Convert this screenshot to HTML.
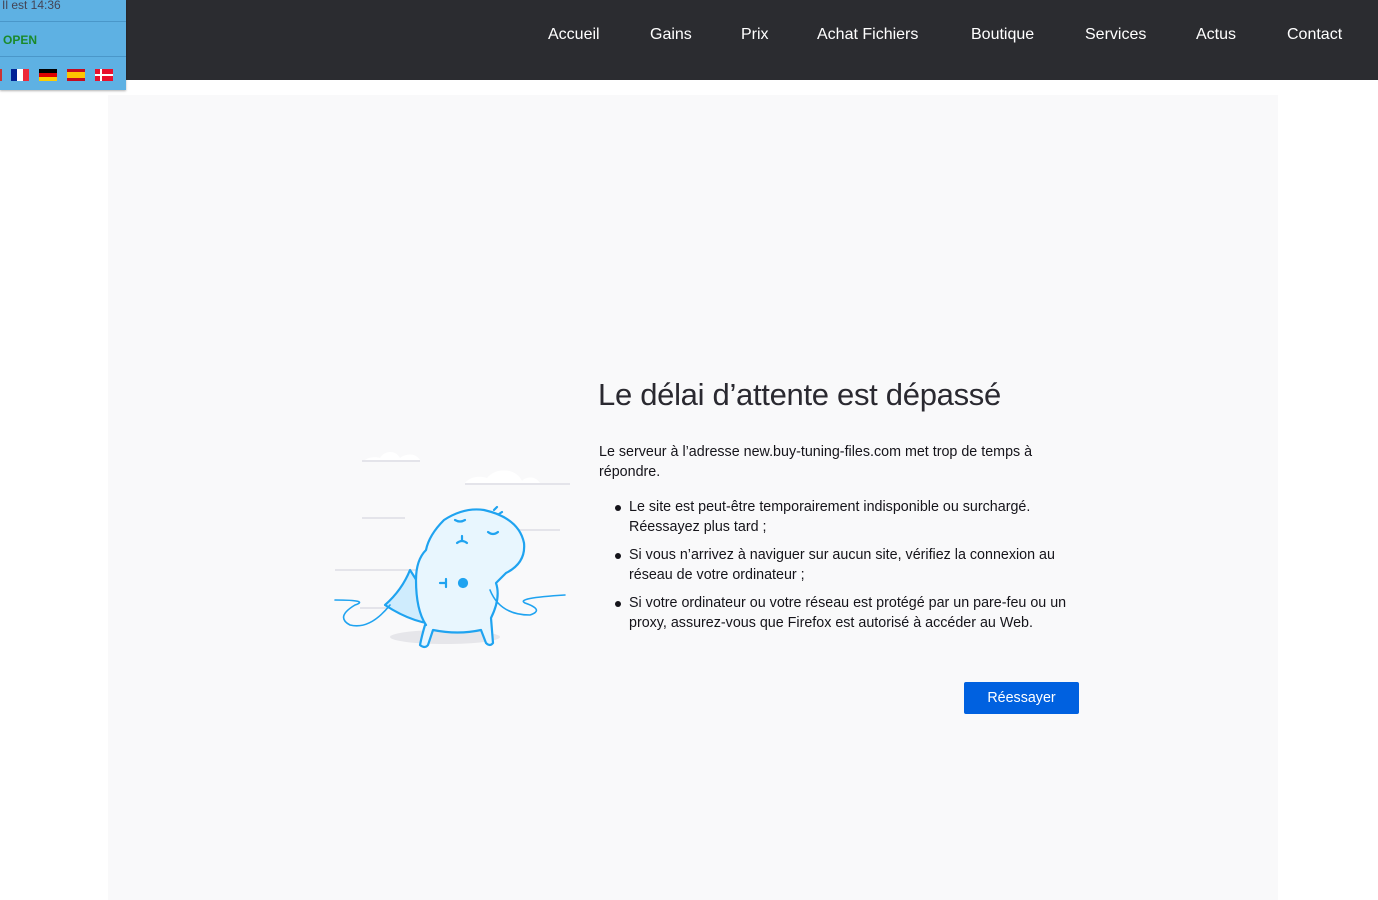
<!DOCTYPE html>
<html><head><meta charset="utf-8"><style>
*{margin:0;padding:0;box-sizing:border-box}
body{width:1378px;height:900px;background:#fff;font-family:"Liberation Sans",sans-serif;position:relative;overflow:hidden}
.nav{position:absolute;left:0;top:0;width:1378px;height:80px;background:#2b2c30}
.nav a{position:absolute;top:26px;color:#fff;font-size:16px;text-decoration:none}
.wid{position:absolute;left:0;top:0;width:126px;height:90px;background:#5eb1e3;box-shadow:0 1px 2px rgba(0,0,0,.3)}
.wid .t{position:absolute;left:2px;top:-2px;font-size:12px;color:#445}
.wid .l{position:absolute;left:0;width:126px;height:1px;background:#4a97c9}
.wid .o{position:absolute;left:3px;top:33px;font-size:12px;font-weight:bold;color:#1a8a2a}
.flag{position:absolute;top:69px;width:18px;height:12px}
.panel{position:absolute;left:108px;top:95px;width:1170px;height:805px;background:#f9f9fa}
h1{position:absolute;left:598px;top:377px;font-size:31px;font-weight:300;color:#2a2930;letter-spacing:-.3px}
.p{position:absolute;left:599px;top:442px;width:470px;font-size:14.3px;line-height:20px;color:#15141a}
ul{position:absolute;left:629px;top:497px;width:450px;font-size:14.3px;line-height:20px;color:#15141a;list-style:none}
li{position:relative;margin-bottom:8px}
li:before{content:"";position:absolute;left:-14px;top:8px;width:6px;height:6px;border-radius:50%;background:#15141a}
.btn{position:absolute;left:964px;top:682px;width:115px;height:32px;background:#0061e0;color:#fff;font-size:14.3px;text-align:center;line-height:33px;border-radius:2px}
</style></head><body>
<div class="nav">
<a style="left:548px">Accueil</a><a style="left:650px">Gains</a><a style="left:741px">Prix</a><a style="left:817px">Achat Fichiers</a><a style="left:971px">Boutique</a><a style="left:1085px">Services</a><a style="left:1196px">Actus</a><a style="left:1287px">Contact</a>
</div>
<div class="wid">
<div class="t">Il est 14:36</div>
<div class="l" style="top:21px"></div>
<div class="o">OPEN</div>
<div class="l" style="top:56px"></div>
<div style="position:absolute;left:0;top:69px;width:2px;height:12px;background:#c33"></div>
<div class="flag" style="left:11px;background:linear-gradient(90deg,#002395 33%,#fff 33% 66%,#ed2939 66%)"></div>
<div class="flag" style="left:39px;background:linear-gradient(#000 33%,#d00 33% 66%,#fc0 66%)"></div>
<div class="flag" style="left:67px;background:linear-gradient(#c60b1e 25%,#ffc400 25% 75%,#c60b1e 75%)"></div>
<div class="flag" style="left:95px;background:#e8112d"><div style="position:absolute;left:5px;top:0;width:2px;height:12px;background:#fff"></div><div style="position:absolute;left:0;top:5px;width:18px;height:2px;background:#fff"></div></div>
</div>
<div class="panel"></div>
<svg style="position:absolute;left:330px;top:440px" width="250" height="210" viewBox="0 0 250 210">
<g fill="#fff"><path d="M35 20h55c-5-8-15-6-20-2-4-8-15-8-20 0-6-2-12 0-15 2z"/><path d="M135 43h75c-5-8-15-6-18-2-5-12-25-15-35-3-10-3-18 0-22 5z"/></g>
<g stroke="#e4e4ea" stroke-width="2"><line x1="32" y1="21" x2="90" y2="21"/><line x1="135" y1="44" x2="240" y2="44"/><line x1="32" y1="78" x2="75" y2="78"/><line x1="5" y1="130" x2="90" y2="130"/><line x1="180" y1="90" x2="230" y2="90"/><line x1="30" y1="168" x2="100" y2="168"/></g>
<ellipse cx="115" cy="197" rx="55" ry="7" fill="#e6e6ea"/>
<g stroke="#1fa3f0" stroke-width="2.2" fill="#fff" stroke-linejoin="round" stroke-linecap="round">
<path d="M80 130 q-8 20 -25 35 q30 20 60 20 z" fill="#cfecfd"/>
<path d="M95 185 q-3 10 -5 20 q5 4 8 0 l5 -15 q25 5 48 0 l5 13 q4 4 7 0 l-2-25 q10-20 5-35 q5 -5 10 -10 q20 -10 18 -30 q-5 -25 -40 -33 q-20 -3 -40 10 q-15 15 -18 30 q-10 10 -10 30 q0 30 10 45z" fill="#e8f6fe"/>
<path d="M60 165 q-20 25 -40 20 q-15 -8 5 -20 q15 -5 -20 -5" fill="none" stroke-width="1.6"/>
<path d="M160 150 q10 25 40 25 q15 -5 -5 -12 q-10 -5 40 -8" fill="none" stroke-width="1.6"/>
<path d="M125 80 q5 3 10 0 M158 92 q5 4 10 0 M132 96 v4 M127 103 q5 -4 10 0" fill="none"/>
<path d="M164 70 l3 -3 M169 74 l3 -2" fill="none"/>
<circle cx="133" cy="143" r="4" fill="#1fa3f0"/><path d="M110 143 h6 M116 139 v8" fill="none"/>
</g>
</svg>
<h1>Le délai d’attente est dépassé</h1>
<div class="p">Le serveur à l’adresse new.buy-tuning-files.com met trop de temps à répondre.</div>
<ul>
<li>Le site est peut-être temporairement indisponible ou surchargé. Réessayez plus tard ;</li>
<li>Si vous n’arrivez à naviguer sur aucun site, vérifiez la connexion au réseau de votre ordinateur ;</li>
<li>Si votre ordinateur ou votre réseau est protégé par un pare-feu ou un proxy, assurez-vous que Firefox est autorisé à accéder au Web.</li>
</ul>
<div class="btn">Réessayer</div>
</body></html>
